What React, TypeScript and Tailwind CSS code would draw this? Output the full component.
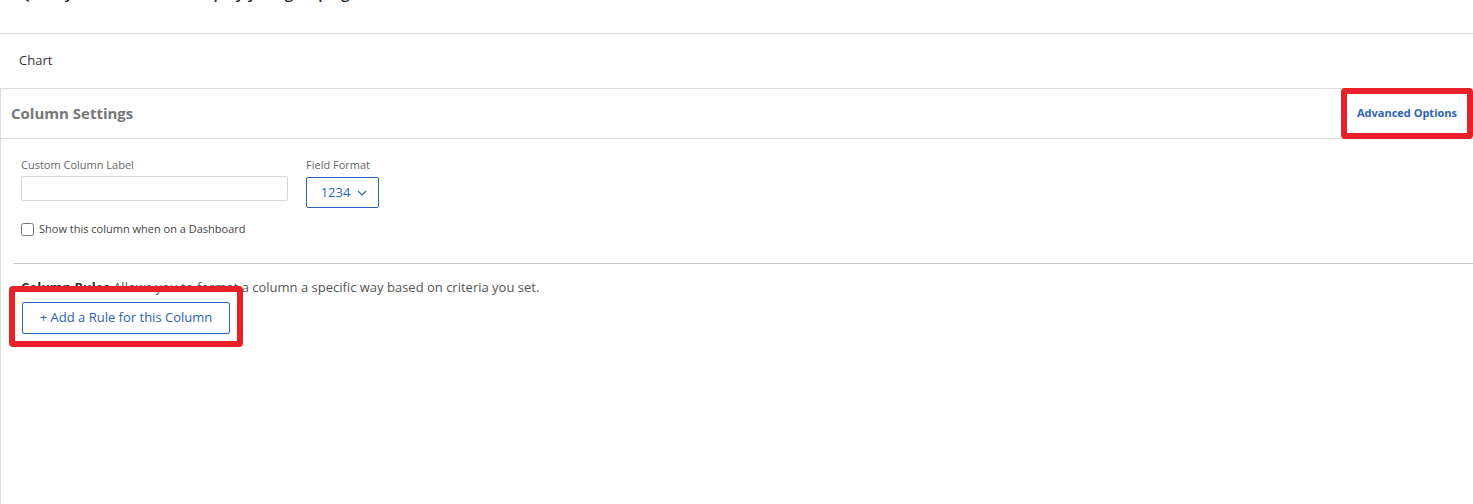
import React, { useState } from 'react'

const font = { fontFamily: '"Open Sans", "Liberation Sans", Arial, sans-serif' }

const App: React.FC = () => {
  const [label, setLabel] = useState('')
  const [showOnDashboard, setShowOnDashboard] = useState(false)

  return (
    <div className="w-[1473px] h-[504px] overflow-hidden bg-white text-[#454545]" style={font}>
      {/* intro line, scrolled mostly out of view */}
      <div className="h-[34px] border-b border-[#dcdcdc] overflow-hidden">
        <p className="-mt-[18px] pl-[19px] text-[15px] font-semibold text-[#222]">
          Quickly summarize and display your grouping
        </p>
      </div>

      <div className="h-[54px] flex items-center pl-[19px] text-[13px] text-[#333]">Chart</div>

      <div className="border-l border-t border-[#dcdcdc] h-[416px]">
        <div className="h-[50px] border-b border-[#dcdcdc] flex items-center justify-between">
          <h2 className="pl-[10px] text-[15px] font-bold text-[#777]">Column Settings</h2>
          <div className="h-[51px] w-[132px] -mt-px border-[6px] border-[#e8202a] rounded-[4px] flex items-center justify-center">
            <button className="text-[11px] font-bold text-[#2a62c0]">Advanced Options</button>
          </div>
        </div>

        <div className="pl-[20px] pt-[19px]">
          <div className="flex gap-[18px]">
            <div className="flex flex-col">
              <label className="text-[11px] text-[#666] leading-[14px]">Custom Column Label</label>
              <input
                value={label}
                onChange={e => setLabel(e.target.value)}
                className="mt-[4px] w-[267px] h-[25px] border border-[#d6d6d6] rounded-[2px] outline-none px-2 text-[12px]"
              />
            </div>
            <div className="flex flex-col">
              <label className="text-[11px] text-[#666] leading-[14px]">Field Format</label>
              <button className="mt-[5px] w-[73px] h-[31px] border border-[#2a62c0] rounded-[2px] flex items-center justify-center gap-[7px] pl-[3px] text-[13px] text-[#2a62c0]">
                1234
                <svg width="10" height="6" viewBox="0 0 10 6" fill="none">
                  <path d="M1 1l4 4 4-4" stroke="#2a62c0" strokeWidth="1.1" />
                </svg>
              </button>
            </div>
          </div>

          <label className="mt-[13px] flex items-center gap-[5px] text-[11px] text-[#444]">
            <input
              type="checkbox"
              checked={showOnDashboard}
              onChange={e => setShowOnDashboard(e.target.checked)}
              className="w-[13px] h-[13px] m-0"
            />
            Show this column when on a Dashboard
          </label>
        </div>

        <div className="ml-[13px] mt-[25px] border-t border-[#c8c8c8]" />

        <div className="pt-[15px]">
          <p className="pl-[20px] text-[13px] text-[#555] leading-[16px]">
            <span className="font-bold text-[#333]">Column Rules</span> Allows you to format a column a specific way based on criteria you set.
          </p>
          <div className="-mt-[9px] ml-[8px] w-[234px] h-[61px] border-[6px] border-[#e8202a] rounded-[4px] relative">
            <button className="absolute left-[7px] top-[10px] w-[208px] h-[32px] border border-[#2a62c0] rounded-[2px] text-[13px] text-[#2a62c0] bg-white">
              + Add a Rule for this Column
            </button>
          </div>
        </div>
      </div>
    </div>
  )
}

export default App
